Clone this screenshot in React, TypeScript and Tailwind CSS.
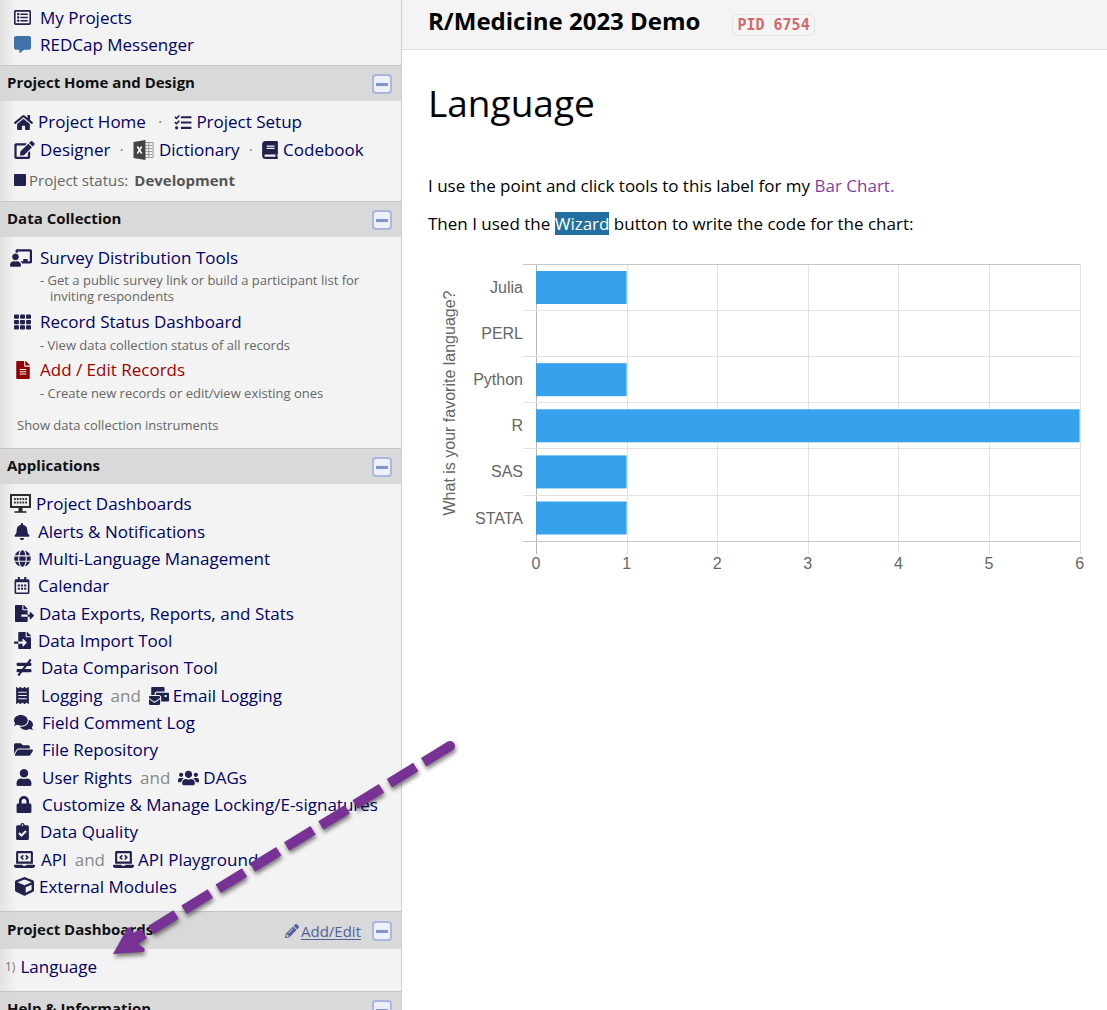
import type { ComponentType, ReactNode } from "react";
import {
  FaBell,
  FaBook,
  FaChalkboardTeacher,
  FaClipboardCheck,
  FaCommentAlt,
  FaComments,
  FaCube,
  FaEdit,
  FaFileAlt,
  FaFileExport,
  FaFileImport,
  FaFolderOpen,
  FaGlobe,
  FaHome,
  FaLaptopCode,
  FaLock,
  FaMailBulk,
  FaNotEqual,
  FaPencilAlt,
  FaReceipt,
  FaRegCalendarAlt,
  FaRegListAlt,
  FaTasks,
  FaTh,
  FaUser,
  FaUsers,
} from "react-icons/fa";

type Icon = ComponentType<{ className?: string }>;

function ExcelIcon({ className }: { className?: string }) {
  return (
    <svg viewBox="0 0 20 20" className={className} aria-hidden="true">
      <rect x="10" y="2.5" width="9.5" height="15" fill="#f4f4f4" stroke="#999" strokeWidth="1" />
      <path d="M12 5.5h6.5M12 8.5h6.5M12 11.5h6.5M12 14.5h6.5M15.2 3v14" stroke="#999" strokeWidth="1" />
      <path d="M0 2 12 0v20L0 18z" fill="#444" />
      <path d="m3.8 6.5 4.4 7M8.2 6.5l-4.4 7" stroke="#fff" strokeWidth="1.5" />
    </svg>
  );
}

function BoardIcon({ className }: { className?: string }) {
  return (
    <svg viewBox="0 0 21 19" className={className} aria-hidden="true">
      <rect x="1" y="1" width="19" height="12" fill="#eee" stroke="#2b2b2b" strokeWidth="2" />
      <path d="M4 5h13M4 8.5h13" stroke="#333" strokeWidth="2" strokeDasharray="1.8 1" />
      <path d="M4.5 18h12" stroke="#2b2b2b" strokeWidth="1.6" />
      <path d="M8.5 14h4v4h-4z" fill="#2b2b2b" />
    </svg>
  );
}

function ToggleButton({ label }: { label: string }) {
  return (
    <button
      type="button"
      aria-label={`Collapse ${label}`}
      className="flex h-5 w-5 shrink-0 items-center justify-center rounded border-2 border-[#a9b6e2] bg-[#edf0fa]"
    >
      <span className="h-[3px] w-3 bg-[#8593cf]" />
    </button>
  );
}

function Header({ title, children }: { title: string; children?: ReactNode }) {
  return (
    <div className="flex items-center border-t border-[#c4c4c4] bg-[#d6d6d6]/90 pt-px pr-[9px] pl-[7px]">
      <h2 className="flex-1 pb-[3px] text-[15px] leading-[31px] font-bold text-[#111]">{title}</h2>
      {children}
      <ToggleButton label={title} />
    </div>
  );
}

type LinkProps = { icon: Icon; size: string; text: string; tone?: string };

function NavLink({ icon: IconTag, size, text, tone = "text-[#000066]" }: LinkProps) {
  return (
    <a href="#" className={`flex w-fit items-center ${tone}`}>
      <IconTag className={`shrink-0 text-[#22204d] ${size}`} />
      <span>{text}</span>
    </a>
  );
}

const appGroups: { items: LinkProps[] }[][] = [
  [{ items: [{ icon: BoardIcon, size: "-ml-1 mr-[5px] w-[21px] h-[19px]", text: "Project Dashboards" }] }],
  [
    { items: [{ icon: FaBell, size: "mr-2 w-[16px] h-[17px]", text: "Alerts & Notifications" }] },
    { items: [{ icon: FaGlobe, size: "mr-[7px] w-[17px] h-[17px]", text: "Multi-Language Management" }] },
    { items: [{ icon: FaRegCalendarAlt, size: "mr-2 w-[16px] h-[17px]", text: "Calendar" }] },
  ],
  [
    { items: [{ icon: FaFileExport, size: "ml-px mr-[5px] w-[19px] h-[17px]", text: "Data Exports, Reports, and Stats" }] },
    { items: [{ icon: FaFileImport, size: "mr-[7px] w-[17px] h-[17px]", text: "Data Import Tool" }] },
    { items: [{ icon: FaNotEqual, size: "ml-0.5 mr-[9px] w-[16px] h-[17px]", text: "Data Comparison Tool" }] },
  ],
  [
    {
      items: [
        { icon: FaReceipt, size: "ml-0.5 mr-3 w-[13px] h-[17px]", text: "Logging" },
        { icon: FaMailBulk, size: "mr-1 w-[20px] h-[18px]", text: "Email Logging" },
      ],
    },
    { items: [{ icon: FaComments, size: "mr-[9px] w-[19px] h-[17px]", text: "Field Comment Log" }] },
    { items: [{ icon: FaFolderOpen, size: "mr-[9px] w-[19px] h-[17px]", text: "File Repository" }] },
  ],
  [
    {
      items: [
        { icon: FaUser, size: "ml-0.5 mr-[10px] w-[16px] h-[17px]", text: "User Rights" },
        { icon: FaUsers, size: "mr-1 w-[21px] h-[18px]", text: "DAGs" },
      ],
    },
    { items: [{ icon: FaLock, size: "ml-0.5 mr-[10px] w-[16px] h-[17px]", text: "Customize & Manage Locking/E-signatures" }] },
    { items: [{ icon: FaClipboardCheck, size: "ml-0.5 mr-[11px] w-[13px] h-[17px]", text: "Data Quality" }] },
  ],
  [
    {
      items: [
        { icon: FaLaptopCode, size: "mr-[6px] w-[21px] h-[17px]", text: "API" },
        { icon: FaLaptopCode, size: "mr-1 w-[21px] h-[17px]", text: "API Playground" },
      ],
    },
    { items: [{ icon: FaCube, size: "ml-px mr-[5px] w-[19px] h-[19px]", text: "External Modules" }] },
  ],
];

function Sidebar() {
  return (
    <nav
      aria-label="Project menu"
      className="w-[402px] shrink-0 border-r border-[#cfcfcf] bg-[#f3f3f3] bg-linear-to-r from-[#e2e2e2] to-[#f3f3f3] to-[16px] text-[17px] leading-[27px]"
    >
      <ul className="pt-1 pb-[7px] pl-[14px]">
        <li className="flex">
          <NavLink icon={FaRegListAlt} size="mr-[9px] w-[17px] h-[17px]" text="My Projects" />
        </li>
        <li className="flex">
          <NavLink icon={FaCommentAlt} size="mr-[9px] w-[17px] h-[17px] !text-[#3e72a8]" text="REDCap Messenger" />
        </li>
      </ul>

      <Header title="Project Home and Design" />
      <div className="pt-[7px] pb-[11px] pl-[14px] leading-7">
        <div className="flex">
          <NavLink icon={FaHome} size="mr-[5px] w-[19px] h-[17px]" text="Project Home" />
          <span className="mx-3 text-[#888]">·</span>
          <NavLink icon={FaTasks} size="mr-1 w-[18px] h-[17px]" text="Project Setup" />
        </div>
        <div className="flex">
          <NavLink icon={FaEdit} size="mr-[5px] w-[21px] h-[18px]" text="Designer" />
          <span className="mx-[9px] text-[#888]">·</span>
          <NavLink icon={ExcelIcon} size="mr-[5px] w-[21px] h-5" text="Dictionary" />
          <span className="mx-[9px] text-[#888]">·</span>
          <NavLink icon={FaBook} size="mr-[5px] w-[16px] h-[18px]" text="Codebook" />
        </div>
        <p className="flex items-center pt-1.5 text-[15px] leading-5 text-[#666]">
          <span className="mr-[3px] h-3 w-3 rounded-[1px] bg-[#22204d]" />
          Project status:
          <b className="ml-1.5 text-[#555]">Development</b>
        </p>
      </div>

      <Header title="Data Collection" />
      <div className="pt-[7px] pb-[9px] pl-[14px] text-[#666]">
        <NavLink icon={FaChalkboardTeacher} size="-ml-1 mr-2 w-[22px] h-[18px]" text="Survey Distribution Tools" />
        <p className="max-w-[360px] pt-px pb-1 pl-9 -indent-[10px] text-[13px] leading-4">
          - Get a public survey link or build a participant list for inviting respondents
        </p>
        <NavLink icon={FaTh} size="mr-[9px] w-[17px] h-[18px]" text="Record Status Dashboard" />
        <p className="pb-px pl-[26px] text-[13px] leading-5">- View data collection status of all records</p>
        <NavLink
          icon={FaFileAlt}
          size="ml-0.5 mr-[10px] w-[14px] h-[18px] !text-[#900000]"
          text="Add / Edit Records"
          tone="text-[#a00000]"
        />
        <p className="pb-px pl-[26px] text-[13px] leading-5">- Create new records or edit/view existing ones</p>
        <button type="button" className="mt-2 ml-[3px] block text-[13px] leading-[27px]">
          Show data collection instruments
        </button>
      </div>

      <Header title="Applications" />
      <ul className="flex flex-col gap-px pt-1.5 pb-[11px] pl-[14px]">
        {appGroups.map((group, index) => (
          <li key={index}>
            <ul>
              {group.map(({ items }) => (
                <li key={items[0].text} className="flex whitespace-nowrap">
                  <NavLink {...items[0]} />
                  {items[1] && (
                    <>
                      <span className="mx-2 text-[#888]">and</span>
                      <NavLink {...items[1]} />
                    </>
                  )}
                </li>
              ))}
            </ul>
          </li>
        ))}
      </ul>

      <Header title="Project Dashboards">
        <a href="#" className="mr-[11px] flex items-center text-[15px] leading-9 text-[#53619a]">
          <FaPencilAlt className="mr-0.5 h-[14px] w-[14px]" />
          <span className="underline underline-offset-2">Add/Edit</span>
        </a>
      </Header>
      <ol className="pt-1 pb-[11px] pl-[5px]">
        <li className="flex items-center gap-[5px]">
          <span className="text-xs text-[#777]">1)</span>
          <a href="#" className="text-[#000066]">
            Language
          </a>
        </li>
      </ol>

      <Header title="Help & Information" />
    </nav>
  );
}

const chartRows = [
  { label: "Julia", value: 1 },
  { label: "PERL", value: 0 },
  { label: "Python", value: 1 },
  { label: "R", value: 6 },
  { label: "SAS", value: 1 },
  { label: "STATA", value: 1 },
];
const plot = { left: 108, top: 9, step: 90.6, row: 46.1, bottom: 286 };

function BarChart() {
  const right = plot.left + 6 * plot.step;
  return (
    <svg
      viewBox="0 0 660 324"
      role="img"
      aria-label="Bar chart of favorite languages"
      className="block w-full font-['Liberation_Sans',Arial,sans-serif] text-[16px]"
    >
      {[0, 1, 2, 3, 4, 5, 6].map((n) => (
        <g key={n}>
          <line
            x1={Math.round(plot.left + n * plot.step) + 0.5}
            x2={Math.round(plot.left + n * plot.step) + 0.5}
            y1={plot.top}
            y2={plot.bottom + 13}
            stroke={n === 0 ? "#b5b5b5" : "#e2e2e2"}
          />
          <text x={plot.left + n * plot.step} y={314} textAnchor="middle" fill="#666">
            {n}
          </text>
        </g>
      ))}
      {[0, 1, 2, 3, 4, 5, 6].map((n) => (
        <line
          key={n}
          x1={plot.left - 13}
          x2={right}
          y1={Math.round(plot.top + n * plot.row) + 0.5}
          y2={Math.round(plot.top + n * plot.row) + 0.5}
          stroke={n === 0 || n === 6 ? "#c6c6c6" : "#e2e2e2"}
        />
      ))}
      {chartRows.map(({ label, value }, i) => (
        <g key={label}>
          <rect
            x={plot.left}
            y={plot.top + i * plot.row + 7}
            width={value * plot.step}
            height={33}
            fill="#36a2eb"
          />
          <text x={plot.left - 13} y={plot.top + i * plot.row + 29} textAnchor="end" fill="#666">
            {label}
          </text>
        </g>
      ))}
      <text transform="translate(27 148) rotate(-90)" textAnchor="middle" fill="#666">
        What is your favorite language?
      </text>
    </svg>
  );
}

function Arrow() {
  return (
    <svg
      viewBox="0 0 360 230"
      aria-hidden="true"
      className="pointer-events-none absolute top-[735px] left-[105px] h-[230px] w-[360px] drop-shadow-[1px_3px_2px_rgba(0,0,0,0.5)]"
    >
      <path d="M345 11 46 195" stroke="#783296" strokeWidth="10" strokeDasharray="31 9.2" />
      <circle cx="345" cy="11" r="5" fill="#783296" />
      <path d="M8 219 22 194q2-3 4-1l2 5 8-4 6 9-9 6 6 4q2 3-1 4z" fill="#783296" />
    </svg>
  );
}

export default function App() {
  return (
    <div className="relative flex h-screen overflow-hidden bg-white font-['Open_Sans',sans-serif] text-black">
      <Sidebar />
      <main className="min-w-0 flex-1">
        <header className="flex items-baseline gap-8 border-b border-[#dcdcdc] bg-[#f4f4f4] pt-[3px] pb-[10px] pl-[26px]">
          <h1 className="text-2xl leading-9 font-bold">R/Medicine 2023 Demo</h1>
          <code className="rounded-md border border-[#e4e4e4] bg-[#f5f5f5] px-1 font-['DejaVu_Sans_Mono',monospace] text-[15px] leading-5 font-bold text-[#d36a6e]">
            PID 6754
          </code>
        </header>
        <div className="pr-[19px] pl-[26px] text-[17px] leading-6">
          <h2 className="pt-[27px] text-[37px] leading-[52px]">Language</h2>
          <p className="pt-[45px]">
            I use the point and click tools to this label for my <span className="text-[#843fa1]">Bar Chart.</span>
          </p>
          <p className="pt-[14px] pb-[19px]">
            Then I used the <span className="bg-[#236fa1] text-white">Wizard</span> button to write the code for the
            chart:
          </p>
          <BarChart />
        </div>
      </main>
      <Arrow />
    </div>
  );
}
